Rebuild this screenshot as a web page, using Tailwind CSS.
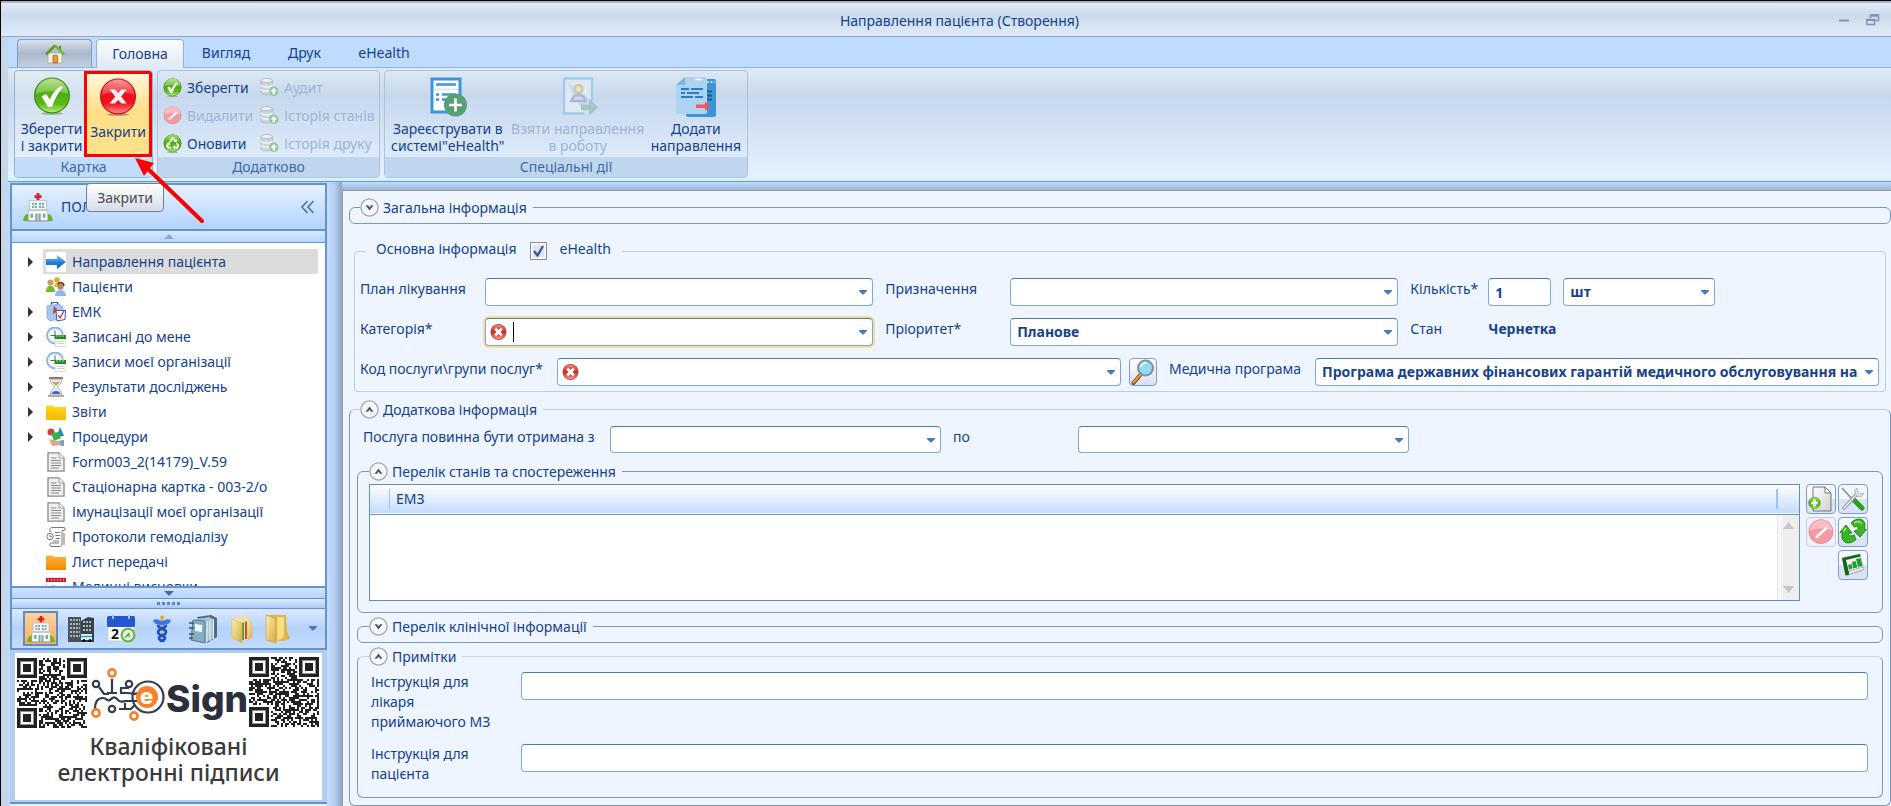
<!DOCTYPE html>
<html lang="uk">
<head>
<meta charset="utf-8">
<title>Направлення пацієнта (Створення)</title>
<script src="https://cdn.jsdelivr.net/npm/@tailwindcss/browser@4"></script>
</head>
<body class="h-screen overflow-hidden font-['Noto_Sans','Open_Sans',sans-serif] text-sm text-[#15428b] bg-[#bfdbff]">

<!-- Shared gradients and icon symbols -->
<svg width="0" height="0" class="absolute" aria-hidden="true">
  <defs>
    <linearGradient id="gGreen" x1="0" y1="0" x2="0" y2="1"><stop offset="0" stop-color="#a6dc6a"/><stop offset=".45" stop-color="#4fae14"/><stop offset=".75" stop-color="#5cb81c"/><stop offset="1" stop-color="#b4ee70"/></linearGradient>
    <linearGradient id="gRed" x1="0" y1="0" x2="0" y2="1"><stop offset="0" stop-color="#ff7a80"/><stop offset=".4" stop-color="#f0101c"/><stop offset=".7" stop-color="#ee1320"/><stop offset="1" stop-color="#ff8a8a"/></linearGradient>
    <linearGradient id="gErr" x1="0" y1="0" x2="0" y2="1"><stop offset="0" stop-color="#f08a80"/><stop offset=".5" stop-color="#c92a20"/><stop offset="1" stop-color="#ef9a84"/></linearGradient>
    <linearGradient id="gArrow" x1="0" y1="0" x2="0" y2="1"><stop offset="0" stop-color="#7cc8f4"/><stop offset=".5" stop-color="#2386d8"/><stop offset="1" stop-color="#0c5cb0"/></linearGradient>
    <linearGradient id="gYel" x1="0" y1="0" x2="0" y2="1"><stop offset="0" stop-color="#ffd91a"/><stop offset="1" stop-color="#f3b800"/></linearGradient>
    <linearGradient id="gOra" x1="0" y1="0" x2="0" y2="1"><stop offset="0" stop-color="#ffb33c"/><stop offset="1" stop-color="#f08a00"/></linearGradient>
    <linearGradient id="gFold" x1="0" y1="0" x2="1" y2="1"><stop offset="0" stop-color="#fbf0b4"/><stop offset="1" stop-color="#d8a93a"/></linearGradient>
    <linearGradient id="gDoc" x1="0" y1="0" x2="1" y2="1"><stop offset="0" stop-color="#fff"/><stop offset="1" stop-color="#cfcfcf"/></linearGradient>
  </defs>
  <symbol id="ok" viewBox="0 0 38 38"><ellipse cx="19" cy="36.500" rx="11" ry="1.300" fill="#6d8b5c" opacity=".6"/><circle cx="19" cy="18.500" r="18" fill="#3b8f17"/><circle cx="19" cy="18.500" r="16.800" fill="url(#gGreen)"/><path d="M3 17a16 16 0 0 1 32 0c-9-4-22-4-32 0z" fill="#fff" opacity=".22"/><path d="M8.500 19.500l4.500-2.500 4 5.500c2-6 6-10.500 11-13.500l2 1.500c-5 5-8.500 11.500-11 19.500h-4z" fill="#fff"/></symbol>
  <symbol id="close" viewBox="0 0 38 38"><ellipse cx="19" cy="36.500" rx="11" ry="1.300" fill="#8b5c5c" opacity=".6"/><circle cx="19" cy="18.500" r="18" fill="#c4121c"/><circle cx="19" cy="18.500" r="16.800" fill="url(#gRed)"/><path d="M3 17a16 16 0 0 1 32 0c-9-4-22-4-32 0z" fill="#fff" opacity=".2"/><path d="M10.500 11.500h5.500l3.200 3.600 3.200-3.600h5.400l-5.600 7 5.600 7h-5.400l-3.200-3.600-3.200 3.600h-5.500l5.800-7z" fill="#f1f1f1"/></symbol>
  <symbol id="del" viewBox="0 0 38 38"><circle cx="19" cy="18.500" r="18" fill="#e98b95"/><circle cx="19" cy="18.500" r="16.500" fill="#f49aa2"/><path d="M3 17a16 16 0 0 1 32 0c-9-4-22-4-32 0z" fill="#fff" opacity=".35"/><path d="M10.500 25.500l16-14.500 2.500 3-16 14.500z" fill="#fff"/></symbol>
  <symbol id="recycle" viewBox="0 0 38 38"><ellipse cx="19" cy="36.500" rx="11" ry="1.300" fill="#6d8b5c" opacity=".6"/><circle cx="19" cy="18.500" r="18" fill="#3b8f17"/><circle cx="19" cy="18.500" r="16.800" fill="url(#gGreen)"/><g fill="none" stroke="#fff" stroke-width="3.600"><path d="M14 16l4-7h3l4 6M27.500 18l3 5-2 4h-6M16 27h-6l-2-3 3-6"/></g><path d="M21 16h7v-6zM24 22v9l-5-4.500zM7 19l6-3 2 7z" fill="#fff"/></symbol>
  <symbol id="db" viewBox="0 0 20 20"><g stroke="#aab5c0" stroke-width=".8"><path d="M1 3v13c0 3 12 3 12 0V3z" fill="#ccd5dd"/><ellipse cx="7" cy="3.200" rx="6" ry="2.200" fill="#e9eef2"/><path d="M1 7.500c0 3 12 3 12 0M1 12c0 3 12 3 12 0" fill="none" stroke="#f1f4f7" stroke-width="1.400"/></g><circle cx="14.500" cy="14.500" r="5" fill="#8fc9a0"/><path d="M14.500 11l3.500 3.700h-2.300V18h-2.400v-3.300H11z" fill="#fff"/></symbol>
  <symbol id="err" viewBox="0 0 18 18"><circle cx="9" cy="9" r="8.500" fill="#b9473d"/><circle cx="9" cy="9" r="7.700" fill="url(#gErr)"/><path d="M5.500 5.500l7 7M12.500 5.500l-7 7" stroke="#fff" stroke-width="2.800"/></symbol>
  <symbol id="tri" viewBox="0 0 8 5"><path d="M0 0h8v1L4.500 4.500h-1L0 1z" fill="#4a7ab8"/></symbol>
  <symbol id="hosp" viewBox="0 0 28 28"><path d="M12.700 1h2.600v2h2v2.600h-2v2h-2.600v-2h-2V3h2z" fill="#d81e2c"/><path d="M0 27c1-6 4-8 7-5v5zM28 27c-1-6-4-8-7-5v5z" fill="#62b52c"/><path d="M6 8h16v9H6z" fill="#f4f6f7" stroke="#b3b9bd" stroke-width=".7"/><path d="M5 17h18v10H5z" fill="#fff" stroke="#b3b9bd" stroke-width=".7"/><path d="M4 16h20v2H4z" fill="#c9c9c3"/><path d="M8.500 10h4.500v5H8.500zM15 10h4.500v5H15zM11.500 20h5v7h-5zM7 20h2.500v4H7zM18.500 20H21v4h-2.500z" fill="#7ba8ad"/><path d="M10.700 10v5M17.200 10v5M14 20v7M8.500 12.500h11" stroke="#fff" stroke-width=".8"/><path d="M3 27h22" stroke="#999" /></symbol>
  <symbol id="page" viewBox="0 0 20 20"><path d="M2 .8h11l5 5.200v13.200H2z" fill="#efefef" stroke="#8d8d8d" stroke-width="1.300"/><path d="M13 1v5h5" fill="#fff" stroke="#999"/><path d="M5 6h5.500M5 8.500h10M5 11h10M5 13.500h10M5 16h8" stroke="#8b8b8b" stroke-width="1.100"/></symbol>
  <symbol id="clock" viewBox="0 0 20 20"><circle cx="9" cy="8.500" r="8" fill="#eaf4fb" stroke="#8db6d6" stroke-width="1.800"/><circle cx="9" cy="8.500" r="5.800" fill="#fff" stroke="#cddfeb" stroke-width=".6"/><path d="M9 3.500v5H4.500M9 8.500l3.500 2" stroke="#55606c" fill="none"/><path d="M9 9h11v10.500H9z" fill="#fdfdf6" stroke="#c8c8b8" stroke-width=".6"/><path d="M8.500 8h11.500v4H8.500z" fill="#1e8f22"/><path d="M11 7v3M14 7v3M17 7v3" stroke="#bfe6b8" stroke-width=".9"/><path d="M11 14.500h7M11 16.500h7" stroke="#c7cfc2" stroke-width=".9"/></symbol>
  <symbol id="folder" viewBox="0 0 20 16"><path d="M0 1.500h7l1.500 1.500H20V16H0z"/></symbol>
  <symbol id="down" viewBox="0 0 19 19"><circle cx="9.500" cy="9.500" r="8.600" fill="#f5f8fc" stroke="#a5a5a5" stroke-width="1.300"/><path d="M5.500 7.200h2.500l1.500 2 1.500-2h2.500l-4 5.300z" fill="#555"/></symbol>
  <symbol id="up" viewBox="0 0 19 19"><circle cx="9.500" cy="9.500" r="8.600" fill="#f5f8fc" stroke="#a5a5a5" stroke-width="1.300"/><path d="M5.500 11.800h2.500l1.500-2 1.500 2h2.500l-4-5.300z" fill="#555"/></symbol>
</svg>

<div class="relative flex h-full flex-col border-t border-l border-black">
  <!-- Title bar -->
  <header class="flex h-9 shrink-0 items-center border-t-2 border-b border-t-[#a9b4c6] border-b-[#98a6b9] bg-linear-to-b from-[#e3ecf7] from-0% via-[#cbdaec] via-35% to-[#dfebf9] to-100% pr-[11px]">
    <h1 class="flex-1 pt-0.5 pl-20 text-center">Направлення пацієнта (Створення)</h1>
    <div class="flex items-center gap-4">
      <button aria-label="Згорнути"><svg width="12" height="14"><path d="M1 7.500h10" stroke="#8295b5" stroke-width="2"/></svg></button>
      <button aria-label="Відновити"><svg width="14" height="14" fill="none" stroke="#8295b5" stroke-width="1.500"><path d="M4.500 5V2h8v5.500H9.500"/><path d="M4 2.500h9" stroke-width="2.500"/><path d="M1 6.500h7.500v5H1z"/><path d="M1 7h8" stroke-width="2"/></svg></button>
    </div>
  </header>

  <div class="flex min-h-0 flex-1 flex-col border-l-7 border-[#c6d6ea]">
    <!-- Ribbon tabs -->
    <nav class="flex h-[31px] shrink-0 items-end border-b border-[#8db2e3] pl-[9px]">
      <button aria-label="Початок" class="mr-1 grid h-7 w-[75px] place-items-center rounded-t border border-b-0 border-[#8b9cb6] bg-linear-to-b from-[#dbe2ec] via-[#a9b8ce] via-50% to-[#c5d0e0]">
        <svg width="20" height="20"><path d="M3 9h14v10H3z" fill="#f2efdf" stroke="#b0aa90" stroke-width=".7"/><path d="M14 2h2v4h-2z" fill="#9a6a3a"/><path d="M10 1.500L1 10.500" stroke="#5e9a28" stroke-width="2.600"/><path d="M10 1.500l9 9" stroke="#76b836" stroke-width="2.600"/><path d="M8 11.500h4.500V19H8z" fill="#e8973a" stroke="#a8601a" stroke-width=".7"/></svg>
      </button>
      <button class="-mb-px h-[29px] w-[88px] rounded-t border border-b-0 border-[#8db2e3] bg-linear-to-b from-[#fbfdff] to-[#dfeaf6]">Головна</button>
      <button class="h-7 w-[84px]">Вигляд</button>
      <button class="h-7 w-[73px]">Друк</button>
      <button class="h-7 w-[86px]">eHealth</button>
    </nav>

    <!-- Ribbon -->
    <section class="flex h-[114px] shrink-0 gap-1 border-b border-[#7a9bb8] bg-linear-to-b from-[#dfeaf4] from-0% via-[#c7d8ed] via-25% to-[#e6f2ff] to-100% px-1.5 pt-0.5 pb-[3px] leading-[17px] shadow-[inset_0_-2px_0_#c3f3fb]">
      <div class="flex w-[139px] flex-col overflow-hidden rounded border border-[#8fb4de] bg-white/20">
        <div class="flex min-h-0 flex-1">
          <button class="flex flex-1 flex-col items-center gap-[5px] pt-1.5 pl-1"><svg width="38" height="38"><use href="#ok"/></svg><span class="whitespace-nowrap">Зберегти<br>і закрити</span></button>
          <button class="flex w-[68px] flex-col items-center gap-[7px] border-3 border-[#ff0000] bg-linear-to-b from-[#fff6d8] via-[#ffe08a] via-45% to-[#ffe18c] pt-1"><svg width="38" height="38"><use href="#close"/></svg><span>Закрити</span></button>
        </div>
        <div class="h-5 bg-[#c3dcfb] text-center leading-5 text-[#3e6aaa]">Картка</div>
      </div>

      <div class="flex w-[223px] flex-col overflow-hidden rounded border border-[#aac4dc]">
        <div class="grid min-h-0 flex-1 grid-cols-[97px_1fr] content-evenly pt-0.5 pl-[5px]">
          <button class="flex h-7 items-center gap-[5px]"><svg width="19" height="19"><use href="#ok"/></svg>Зберегти</button>
          <button disabled class="flex h-7 items-center gap-[5px] text-[#9fb5d5]"><svg width="19" height="20"><use href="#db"/></svg>Аудит</button>
          <button disabled class="flex h-7 items-center gap-[5px] text-[#9fb5d5]"><svg width="19" height="19"><use href="#del"/></svg>Видалити</button>
          <button disabled class="flex h-7 items-center gap-[5px] whitespace-nowrap text-[#9fb5d5]"><svg width="19" height="20"><use href="#db"/></svg>Історія станів</button>
          <button class="flex h-7 items-center gap-[5px]"><svg width="19" height="19"><use href="#recycle"/></svg>Оновити</button>
          <button disabled class="flex h-7 items-center gap-[5px] whitespace-nowrap text-[#9fb5d5]"><svg width="19" height="20"><use href="#db"/></svg>Історія друку</button>
        </div>
        <div class="h-5 bg-[#c0d6ee] text-center leading-5 text-[#3e6aaa]">Додатково</div>
      </div>

      <div class="flex w-[364px] flex-col overflow-hidden rounded border border-[#aac4dc]">
        <div class="flex min-h-0 flex-1 justify-between px-1.5 whitespace-nowrap">
          <button class="flex flex-col items-center gap-[3px] pt-1.5">
            <svg width="40" height="40"><path d="M4 2h28v33H4z" fill="#fff" stroke="#3a96d8" stroke-width="3"/><path d="M8 7.500h20M14 17.500h14M14 22.500h8" stroke="#3a96d8" stroke-width="2.400"/><path d="M8 17.500h3M8 22.500h3" stroke="#3a96d8" stroke-width="2.400"/><path d="M6 12.500h24" stroke="#e3e8ec" stroke-width="2"/><circle cx="27.500" cy="28" r="11.500" fill="#5a9e75"/><path d="M21 28h13M27.500 21.500v13" stroke="#fff" stroke-width="2.600"/></svg>
            <span>Зареєструвати в<br>системі"eHealth"</span></button>
          <button disabled class="flex flex-col items-center gap-[3px] pt-1.5 text-[#9fb5d5]">
            <svg width="40" height="40"><path d="M6 1.500h28V24M26 36.500H6v-35" fill="#dfe9f4" stroke="#9fcbea" stroke-width="2.400"/><circle cx="20.500" cy="12" r="4" fill="#e3e0d0" stroke="#cfc8a0" stroke-width="2.400"/><path d="M13.500 24c1-8 13-8 14 0z" fill="#cdd8ea" stroke="#a7b8dc" stroke-width="2.400"/><path d="M23 27.500h8v-5.500l9.500 8.500-9.500 8V33h-8z" fill="#a5c6c0"/></svg>
            <span>Взяти направлення<br>в роботу</span></button>
          <button class="flex flex-col items-center gap-[3px] pt-1.5">
            <svg width="42" height="40"><rect x="11" y="2" width="30" height="38" rx="2" fill="#3a96d6"/><path d="M32 5h2M35.500 5h2M39 5h1" stroke="#b7dbf3" stroke-width="2"/><path d="M30 14.500h7M30 18.500h7M30 22.500h7" stroke="#1f5a8a" stroke-width="1.800"/><path d="M10 0h20a2 2 0 0 1 2 2v33a2 2 0 0 1-2 2H3a2 2 0 0 1-2-2V9z" fill="#aed3f0"/><path d="M10 0v8H1z" fill="#7fb4e4"/><path d="M20 2.500h7" stroke="#fff" stroke-width="1.500"/><path d="M6 12h8M16 12h12M6 16h4M12 16h12M6 20h12M20 20h8" stroke="#2f7dba" stroke-width="1.800"/><path d="M21 27.500h9v-3l5 4.800-5 4.700v-3h-9z" fill="#f7525e"/></svg>
            <span>Додати<br>направлення</span></button>
        </div>
        <div class="h-5 bg-[#c0d6ee] text-center leading-5 text-[#3e6aaa]">Спеціальні дії</div>
      </div>
    </section>

    <!-- Work area -->
    <div class="flex min-h-0 flex-1 pl-0.5">
      <!-- Navigation panel -->
      <aside class="flex w-[317px] shrink-0 flex-col bg-[#b3cdef] pt-px">
        <div class="flex h-12 shrink-0 items-center border-2 border-[#6593cf] bg-linear-to-b from-[#e6f1ff] to-[#b3d3ff] pr-[11px] pl-[11px]">
          <svg width="30" height="30"><use href="#hosp"/></svg>
          <h2 class="flex-1 pl-2">ПОЛІКЛІНІКА</h2>
          <button aria-label="Згорнути панель"><svg width="13" height="14" fill="none" stroke="#4f7ab8" stroke-width="1.800"><path d="M6.500 1L1 7l5.500 6M12.500 1L7 7l5.500 6"/></svg></button>
        </div>
        <button aria-label="Прокрутити вгору" class="grid h-3 shrink-0 place-items-center border-x-2 border-b border-[#6593cf] bg-linear-to-b from-[#d9e9ff] to-[#b7d5fc]"><svg width="10" height="5"><path d="M5 0l5 5H0z" fill="#8caad2"/></svg></button>
        <ul class="min-h-0 flex-1 overflow-hidden border-x-2 border-[#6593cf] bg-white pt-1.5 pr-[7px] pl-[15px] leading-[25px] whitespace-nowrap">
          <li class="flex items-center"><svg width="6" height="10"><path d="M1 0l5 5-5 5z" fill="#333"/></svg><a href="#" class="ml-[10px] flex flex-1 items-center gap-1.5 bg-[#dcdcdc] pl-[3px]"><svg width="20" height="20" class="bg-white"><path d="M0 7h11V3l9 7-9 7v-4H0z" fill="url(#gArrow)"/></svg>Направлення пацієнта</a></li>
          <li><a href="#" class="ml-4 flex items-center gap-1.5 pl-[3px]"><svg width="20" height="20"><circle cx="4.500" cy="5.500" r="3" fill="#c99a6e"/><path d="M0 15c0-9 9-8 9 0z" fill="#7db52a"/><circle cx="11" cy="3" r="2.800" fill="#d8b02e"/><path d="M8 10c0-6 7-6 8 0z" fill="#e0b83a"/><circle cx="14.500" cy="9.500" r="3.200" fill="#b98a62"/><path d="M12 7c2-3 6-1 6 2" stroke="#5a3a20" fill="none" stroke-width="1.500"/><path d="M9 19c0-8 11-8 11 0z" fill="#8cbcea"/></svg>Пацієнти</a></li>
          <li class="flex items-center"><svg width="6" height="10"><path d="M1 0l5 5-5 5z" fill="#333"/></svg><a href="#" class="ml-[10px] flex items-center gap-1.5 pl-[3px]"><svg width="20" height="20"><path d="M1 4l12-2 4 3v11L4 19 1 16z" fill="#a8c6ec" stroke="#7c9ccc" stroke-width=".7"/><path d="M5 2.500l1-2 5-.5 1 2" fill="none" stroke="#2c62b8" stroke-width="1.600"/><path d="M8 4l3 3-1 3-3 2z" fill="#d43a3a"/><path d="M10 8.500h9.500l-.5 9-8 1.500z" fill="#fff" stroke="#3a5a98"/><path d="M12 13l2 3 4-7" fill="none" stroke="#d23030" stroke-width="1.300"/></svg>ЕМК</a></li>
          <li class="flex items-center"><svg width="6" height="10"><path d="M1 0l5 5-5 5z" fill="#333"/></svg><a href="#" class="ml-[10px] flex items-center gap-1.5 pl-[3px]"><svg width="20" height="20"><use href="#clock"/></svg>Записані до мене</a></li>
          <li class="flex items-center"><svg width="6" height="10"><path d="M1 0l5 5-5 5z" fill="#333"/></svg><a href="#" class="ml-[10px] flex items-center gap-1.5 pl-[3px]"><svg width="20" height="20"><use href="#clock"/></svg>Записи моєї організації</a></li>
          <li class="flex items-center"><svg width="6" height="10"><path d="M1 0l5 5-5 5z" fill="#333"/></svg><a href="#" class="ml-[10px] flex items-center gap-1.5 pl-[3px]"><svg width="20" height="20"><path d="M4 2c0 5 4 6 4 8s-4 3-4 8h12c0-5-4-6-4-8s4-3 4-8z" fill="#dfe9f5" stroke="#8fa6c2" stroke-width=".8"/><path d="M6 5h8l-4 4z" fill="#d9a441"/><path d="M5.500 17c1-4 8-4 9 0z" fill="#3f62c4"/><path d="M3 0h14v2H3z" fill="#9a7a5a"/><path d="M2 18h16v2H2z" fill="#b9a99a"/></svg>Результати досліджень</a></li>
          <li class="flex items-center"><svg width="6" height="10"><path d="M1 0l5 5-5 5z" fill="#333"/></svg><a href="#" class="ml-[10px] flex items-center gap-1.5 pl-[3px]"><svg width="20" height="16" fill="url(#gYel)"><use href="#folder"/></svg>Звіти</a></li>
          <li class="flex items-center"><svg width="6" height="10"><path d="M1 0l5 5-5 5z" fill="#333"/></svg><a href="#" class="ml-[10px] flex items-center gap-1.5 pl-[3px]"><svg width="20" height="20"><circle cx="5" cy="5" r="3.500" fill="#d93a3a"/><path d="M14 0l4 9h-7z" fill="#2a7fd0"/><path d="M5 6l8-1 2 6-7 3z" fill="#2db54a"/><path d="M3 12l8 2 6-1-1 5-10 1z" fill="#d8a98a"/><path d="M14 14l4-1v6h-3z" fill="#7a9ad4"/></svg>Процедури</a></li>
          <li><a href="#" class="ml-4 flex items-center gap-1.5 pl-[3px]"><svg width="20" height="20"><use href="#page"/></svg>Form003_2(14179)_V.59</a></li>
          <li><a href="#" class="ml-4 flex items-center gap-1.5 pl-[3px]"><svg width="20" height="20"><use href="#page"/></svg>Стаціонарна картка - 003-2/о</a></li>
          <li><a href="#" class="ml-4 flex items-center gap-1.5 pl-[3px]"><svg width="20" height="20"><use href="#page"/></svg>Імунацізації моєї організації</a></li>
          <li><a href="#" class="ml-4 flex items-center gap-1.5 pl-[3px]"><svg width="20" height="20" fill="none" stroke="#777"><path d="M4 5V2.500C4 1 5 .5 6 .5h12c1.500 0 1.500 3 0 3h-2v13c0 2-1 3-2.500 3H5c-1.500 0-1.500-3.500 0-3.500h8"/><circle cx="4" cy="9.500" r="3.200"/><path d="M4 7.500v2h1.800M9 5.500h5M9.500 8.500H14M9.500 11.500H14M7 14h6M18 6v12" /></svg>Протоколи гемодіалізу</a></li>
          <li><a href="#" class="ml-4 flex items-center gap-1.5 pl-[3px]"><svg width="20" height="16" fill="url(#gOra)"><use href="#folder"/></svg>Лист передачі</a></li>
          <li><a href="#" class="ml-4 flex items-center gap-1.5 pl-[3px]"><svg width="20" height="20"><path d="M0 1h20v18H0z" fill="#fff" stroke="#b9b9b9"/><path d="M0 1h20v4H0z" fill="#cf1f2a"/><path d="M2 3h16" stroke="#fff" stroke-dasharray="1 2"/><path d="M4 12l3-3 3 3M12 10h4" stroke="#58a83a" fill="none" stroke-width="1.500"/></svg>Медичні висновки</a></li>
        </ul>
        <button aria-label="Прокрутити вниз" class="grid h-3 shrink-0 place-items-center border-2 border-b-0 border-[#6593cf] bg-linear-to-b from-[#cfe3ff] to-[#b7d5fc]"><svg width="10" height="5"><path d="M0 0h10L5 5z" fill="#3f6ab0"/></svg></button>
        <div class="grid h-[11px] shrink-0 place-items-center border-x-2 border-t border-b border-[#6593cf] bg-linear-to-b from-[#dcebff] to-[#a9cbf9]"><svg width="24" height="3"><path d="M0 1.500h24" stroke="#5f86c2" stroke-width="3" stroke-dasharray="3 2"/></svg></div>
        <div class="flex h-[41px] shrink-0 items-center border-2 border-t-0 border-[#6593cf] bg-linear-to-b from-[#dbeaff] via-[#b5d2fb] via-50% to-[#c3dcff] pl-[11px]">
          <button aria-label="Поліклініка" class="grid h-[35px] w-[35px] place-items-center border-2 border-[#5f8ac4] bg-linear-to-b from-[#fdd0a0] to-[#ffb04a]"><svg width="28" height="28"><use href="#hosp"/></svg></button>
          <div class="flex flex-1 items-center justify-between pr-2 pl-[9px]">
            <button aria-label="Стаціонар"><svg width="28" height="28"><path d="M1 2h13v25H1z" fill="#4b5359"/><path d="M14 6l7-4 6 1v24H14z" fill="#39424a"/><path d="M3 5h10M3 9h10M3 13h10M3 17h10M3 21h10M16 7h9M16 11h9M16 15h9" stroke="#a7b4ba" stroke-width="2" stroke-dasharray="2 1"/><path d="M14 19h11v6H14z" fill="#e6f3f8"/><path d="M14 21.500h11" stroke="#2c9cc4" stroke-width="1.500"/><circle cx="17" cy="25.500" r="1.500"/><circle cx="23" cy="25.500" r="1.500"/></svg></button>
            <button aria-label="Календар"><svg width="30" height="28"><path d="M1 10h26v16H1z" fill="#fcfcfc" stroke="#cfcfcf"/><rect x="0" y="1" width="28" height="11" rx="1.500" fill="#2457d0"/><path d="M6 0v4M22 0v4" stroke="#a8c0f0" stroke-width="2"/><text x="4" y="24" font-family="Noto Sans" font-weight="700" font-size="14" fill="#111">2</text><circle cx="21" cy="20" r="7.500" fill="#6db54a"/><circle cx="21" cy="20" r="5.300" fill="#e3f3d9"/><path d="M18.500 22.500l4-4.500M21 20l2 1.500" stroke="#5a9c3c" stroke-width="1.500"/></svg></button>
            <button aria-label="Лікарі"><svg width="28" height="28"><path d="M14 2v25" stroke="#ddaa38" stroke-width="1.500"/><circle cx="14" cy="2.500" r="2" fill="#e9a52c"/><path d="M5 5c4-2 6 0 9 1 3-1 5-3 9-1-1 4-4 5-9 5S6 9 5 5z" fill="#3a78e4"/><path d="M10 10c0 4 8 3 8 7s-7 3-7 6 5 2 4 4M18 10c0 4-8 3-8 7s7 3 7 6-5 2-4 4" fill="none" stroke="#1c4fc8" stroke-width="2.600"/></svg></button>
            <button aria-label="Журнали"><svg width="30" height="30"><path d="M9 3l14-2 6 3v19l-10 6z" fill="#4d6b7d"/><path d="M8 5l13-2 4 2v20l-8 3z" fill="#a7c4d6"/><path d="M5 6l12 1v22L3 26z" fill="#86adc6" stroke="#54788e"/><path d="M7 10l7 1v7l-7-1z" fill="#f1f6f9"/><path d="M19 7v21M22 6v21M25.500 5v20" stroke="#eef4f7"/><path d="M1 9h5M1 14h5M1 20h5M1 24h4" stroke="#44535c" stroke-width="1.300"/></svg></button>
            <button aria-label="Документи"><svg width="24" height="28"><path d="M3 3l11-2 4 2v20H3z" fill="#efe4a6"/><path d="M12 8l2-1v18h-2z" fill="#4a9e3c"/><path d="M15 7l2-1v18h-2z" fill="#d14a2c"/><path d="M17 8l5-3v17l-5 5z" fill="url(#gFold)"/><path d="M2 4l10 4v20L2 23z" fill="url(#gFold)" stroke="#dfb64e" stroke-width=".6"/></svg></button>
            <button aria-label="Папки"><svg width="26" height="30"><path d="M1 1h20l1 16 3 8-6 2H2z" fill="#e0b54a"/><path d="M12 3h7v20l-7 4z" fill="#f6dd86"/><path d="M1 1l10 4v24L1 26z" fill="url(#gFold)" stroke="#caa03a" stroke-width=".6"/></svg></button>
            <button aria-label="Більше" class="pl-1.5"><svg width="8" height="5"><use href="#tri"/></svg></button>
          </div>
        </div>
        <a href="#" class="mx-[5px] mt-[3px] flex h-[147px] shrink-0 flex-col bg-white font-medium text-[#3a3a3c]">
          <svg viewBox="0 0 307 80" class="h-20 w-full">
            <g id="qrA" transform="translate(2 5)" fill="#222"></g>
            <g id="qrB" transform="translate(234 4)" fill="#222"></g>
            <g fill="none" stroke="#343b4a" stroke-width="2.200">
              <circle cx="81" cy="31" r="3.200"/><circle cx="114" cy="31" r="3.200"/><circle cx="97" cy="56" r="3.200"/>
              <path d="M84 34l5 7h5M97 26v14M92 40h10M114 35h-8v5h7c4 0 6 2 10 0M80 56c0-7 3-11 8-11 4 0 4 4 7 2 3-3 5-4 8 0 2 3 5 1 8 1h12M104 56h6v-6M111 56h5l4-4"/>
              <circle cx="133" cy="44" r="15.500"/>
            </g>
            <g fill="none" stroke="#f5822b" stroke-width="2.600"><circle cx="97" cy="20" r="3.600"/><circle cx="81" cy="60" r="3.600"/><circle cx="119" cy="63" r="3.600"/></g>
            <circle cx="132" cy="44" r="11" fill="#f5822b"/>
            <text x="125" y="51" font-family="Inter" font-weight="800" font-size="22" fill="#fff">e</text>
            <text x="151" y="59" font-family="Inter" font-weight="800" font-size="37" fill="#2b303c">Sign</text>
          </svg>
          <span class="text-center text-[23px] leading-[26px]">Кваліфіковані<br>електронні підписи</span>
        </a>
        <div class="mt-[2px] h-1 shrink-0 border-t-2 border-[#6593cf] bg-[#e6f1ff]"></div>
      </aside>

      <div class="w-[15px] shrink-0 bg-linear-to-r from-[#c3dcff] via-[#b4cdf0] to-[#8ea6c8]"></div>

      <!-- Form -->
      <div class="flex min-w-0 flex-1 flex-col">
        <div class="h-2 shrink-0 bg-linear-to-b from-[#c3dcff] to-[#9db5d6]"></div>
        <main class="min-h-0 flex-1 overflow-hidden border-t border-l border-[#9a9a9f] bg-[#eef5ff] pt-[7px] pl-1.5">
          <fieldset class="min-w-0 rounded-md border border-[#7a98bd] pb-1.5 pl-1">
            <legend class="ml-1.5 flex h-[19px] items-center gap-1 pr-1.5 leading-[19px]"><button aria-label="Розгорнути"><svg width="19" height="19"><use href="#down"/></svg></button>Загальна інформація</legend>
          </fieldset>

          <fieldset class="mt-[18px] mr-[5px] ml-[5px] min-w-0 rounded border border-[#bccfdc] pt-[17px] pr-1.5 pb-[5px] pl-[5px]">
            <legend class="ml-1.5 flex h-[19px] items-start gap-[13px] pr-[11px] pl-[10px] leading-[13px]"><span>Основна інформація</span>
              <input id="eh" type="checkbox" checked class="peer sr-only"><label for="eh" aria-label="eHealth" class="grid h-[18px] w-[17px] place-items-center border border-[#8e8f8f] bg-[#dfe3ee] shadow-[inset_0_0_0_2px_#f4f4f4]"><svg width="11" height="12"><path d="M1 6l3.500 4.500L10 1" fill="none" stroke="#3b5597" stroke-width="2.300"/></svg></label>
              <label for="eh">eHealth</label></legend>
            <div class="grid grid-cols-[113px_389fr_113px_389fr_66px_227px_152fr] gap-x-3 gap-y-3 leading-[22px] whitespace-nowrap">
              <label for="plan">План лікування</label>
              <div class="relative h-7"><select id="plan" class="h-7 w-full appearance-none rounded-sm border border-[#7fa6dd] border-t-[#4a78b5] bg-white px-1.5 font-bold"><option></option></select><svg width="8" height="5" class="pointer-events-none absolute top-3 right-1.5"><use href="#tri"/></svg></div>
              <label for="appt">Призначення</label>
              <div class="relative h-7"><select id="appt" class="h-7 w-full appearance-none rounded-sm border border-[#7fa6dd] border-t-[#4a78b5] bg-white px-1.5 font-bold"><option></option></select><svg width="8" height="5" class="pointer-events-none absolute top-3 right-1.5"><use href="#tri"/></svg></div>
              <label for="qty">Кількість*</label>
              <div class="flex gap-3"><input id="qty" value="1" class="h-7 w-[63px] rounded-sm border border-[#7fa6dd] border-t-[#4a78b5] bg-white px-1.5 font-bold">
                <div class="relative h-7 flex-1"><select aria-label="Одиниця" class="h-7 w-full appearance-none rounded-sm border border-[#7fa6dd] border-t-[#4a78b5] bg-white px-1.5 font-bold"><option>шт</option></select><svg width="8" height="5" class="pointer-events-none absolute top-3 right-1.5"><use href="#tri"/></svg></div></div>
              <span></span>

              <label for="cat">Категорія*</label>
              <div class="relative h-7"><select id="cat" class="h-7 w-full appearance-none rounded-sm border border-[#7fa6dd] border-t-[#4a78b5] bg-white px-1.5 font-bold shadow-[0_0_0_2px_#f6dd9a]"><option></option></select><svg width="17" height="18" class="pointer-events-none absolute top-[5px] left-[5px]"><use href="#err"/></svg><i class="pointer-events-none absolute top-1 left-7 h-5 w-px bg-black"></i><svg width="8" height="5" class="pointer-events-none absolute top-3 right-1.5"><use href="#tri"/></svg></div>
              <label for="prio">Пріоритет*</label>
              <div class="relative h-7"><select id="prio" class="h-7 w-full appearance-none rounded-sm border border-[#7fa6dd] border-t-[#4a78b5] bg-white px-1.5 font-bold"><option>Планове</option></select><svg width="8" height="5" class="pointer-events-none absolute top-3 right-1.5"><use href="#tri"/></svg></div>
              <span>Стан</span><b class="font-bold">Чернетка</b><span></span>
            </div>
            <div class="mt-3 flex leading-[22px] whitespace-nowrap">
              <label for="code" class="w-[197px] shrink-0">Код послуги\групи послуг*</label>
              <div class="relative h-7 flex-1"><select id="code" class="h-7 w-full appearance-none rounded-sm border border-[#7fa6dd] border-t-[#4a78b5] bg-white px-1.5 font-bold"><option></option></select><svg width="17" height="18" class="pointer-events-none absolute top-[5px] left-[5px]"><use href="#err"/></svg><svg width="8" height="5" class="pointer-events-none absolute top-3 right-1.5"><use href="#tri"/></svg></div>
              <button aria-label="Пошук" class="ml-2 grid h-7 w-7 shrink-0 place-items-center rounded-sm border border-[#7f9dc6] bg-linear-to-b from-white to-[#d5e1f3]"><svg width="24" height="26"><path d="M2.500 24L10 15" stroke="#7a4a1c" stroke-width="4" stroke-linecap="round"/><path d="M2.500 23.500L9.500 15.500" stroke="#e39a44" stroke-width="2" stroke-linecap="round"/><circle cx="14.500" cy="9" r="7.500" fill="#8fdcf4" stroke="#8a9299" stroke-width="2"/><path d="M9.500 8a5 5 0 0 1 6-4" stroke="#e6fbff" stroke-width="2" fill="none"/></svg></button>
              <label for="prog" class="ml-3 w-[146px] shrink-0">Медична програма</label>
              <div class="relative h-7 min-w-0 flex-1"><select id="prog" class="h-7 w-full appearance-none overflow-hidden rounded-sm border border-[#7fa6dd] border-t-[#4a78b5] bg-white pr-5 pl-1.5 font-bold"><option>Програма державних фінансових гарантій медичного обслуговування населення</option></select><svg width="8" height="5" class="pointer-events-none absolute top-3 right-1.5"><use href="#tri"/></svg></div>
            </div>
          </fieldset>

          <fieldset class="mt-2 min-w-0 rounded-md border border-[#7a98bd] border-t-[#bccfe2] pt-[7px] pr-[7px] pb-[7px] pl-[7px]">
            <legend class="ml-[3px] flex h-[19px] items-center gap-1 pr-1.5 leading-[19px]"><button aria-label="Згорнути"><svg width="19" height="19"><use href="#up"/></svg></button>Додаткова інформація</legend>
            <div class="flex pl-1.5 leading-[22px] whitespace-nowrap">
              <label for="from" class="w-[247px]">Послуга повинна бути отримана з</label>
              <div class="relative h-[27px] w-[331px]"><select id="from" class="h-[27px] w-full appearance-none rounded-sm border border-[#7fa6dd] border-t-[#4a78b5] bg-white"><option></option></select><svg width="8" height="5" class="pointer-events-none absolute top-3 right-1.5"><use href="#tri"/></svg></div>
              <label for="to" class="ml-3 w-[125px]">по</label>
              <div class="relative h-[27px] w-[331px]"><select id="to" class="h-[27px] w-full appearance-none rounded-sm border border-[#7fa6dd] border-t-[#4a78b5] bg-white"><option></option></select><svg width="8" height="5" class="pointer-events-none absolute top-3 right-1.5"><use href="#tri"/></svg></div>
            </div>

            <fieldset class="mt-[9px] min-w-0 rounded-md border border-[#7a98bd] pt-[3px] pr-[14px] pb-[11px] pl-[11px]">
              <legend class="flex h-[19px] items-center gap-1 pr-1.5 leading-[19px]"><button aria-label="Згорнути"><svg width="19" height="19"><use href="#up"/></svg></button>Перелік станів та спостереження</legend>
              <div class="flex gap-1.5">
                <div class="flex h-[117px] flex-1 flex-col border border-[#5f8fce] bg-white">
                  <table class="w-full"><thead><tr class="h-[29px] border-b border-[#6593cf] bg-linear-to-b from-white to-[#c4dcff]"><th class="w-[20px]"><div class="h-5 border-r border-[#9cc3f7]"></div></th><th class="pl-1.5 text-left font-normal">ЕМЗ</th><th class="w-[23px]"><div class="h-5 border-l-2 border-[#9cc3f7]"></div></th></tr></thead></table>
                  <div class="flex w-[22px] flex-1 flex-col items-center justify-between self-end border-l border-[#e6e6e6] bg-linear-to-r from-[#fafafa] to-[#eeeeee] to-30% py-[7px]"><svg width="11" height="7"><path d="M5.500 0L11 7H0z" fill="#c2c6cf"/></svg><svg width="11" height="7"><path d="M0 0h11L5.500 7z" fill="#c2c6cf"/></svg></div>
                </div>
                <div class="grid grid-cols-2 content-start gap-x-0.5 gap-y-[3px]">
                  <button aria-label="Додати" class="grid h-[30px] w-[30px] place-items-center rounded-sm border border-[#7f9dc6] bg-linear-to-b from-[#f4f8ff] from-50% to-[#d9e5f6] to-50%"><svg width="26" height="26"><path d="M5 1h12l6 6v18H5z" fill="url(#gDoc)" stroke="#777"/><path d="M17 1v6h6z" fill="#fff" stroke="#777"/><circle cx="6.500" cy="17" r="5.800" fill="url(#gGreen)" stroke="#5aa832" stroke-width=".8"/><path d="M3 17h7M6.500 13.500v7" stroke="#fff" stroke-width="2.400"/></svg></button>
                  <button aria-label="Налаштування" class="grid h-[30px] w-[30px] place-items-center rounded-sm border border-[#7f9dc6] bg-linear-to-b from-[#f4f8ff] from-50% to-[#d9e5f6] to-50%"><svg width="26" height="26"><path d="M2 2l11 12" stroke="#8f9498" stroke-width="1.800"/><path d="M13 13l9 9" stroke="#2f9e1f" stroke-width="5" stroke-linecap="round"/><path d="M4 22L17 8" stroke="#9aa0a4" stroke-width="3.600" stroke-linecap="round"/><path d="M4 22L17 8" stroke="#e2e5e7" stroke-width="1.600" stroke-linecap="round"/><path d="M17 2c-3 2-3 6 0 8s6 0 7-3l-4 1-2-2z" fill="#dfe2e4" stroke="#a3a7aa" stroke-width=".8"/></svg></button>
                  <button disabled aria-label="Видалити" class="grid h-[30px] w-[30px] place-items-center rounded-sm border border-[#c3d1e6] bg-[#edf2fa]"><svg width="26" height="26"><use href="#del"/></svg></button>
                  <button aria-label="Оновити" class="grid h-[30px] w-[30px] place-items-center rounded-sm border border-[#7f9dc6] bg-linear-to-b from-[#f4f8ff] from-50% to-[#d9e5f6] to-50%"><svg width="28" height="28"><g fill="#37b81f" stroke="#1d7a12" stroke-width=".9"><path d="M7 7l6 8-3.500.2c0 2.500 2 3.500 5.500 1.800l2 4.500c-6 6-15 4-14-4.500l.5-3L1 14.500z"/><path d="M12 5c5-6 14-5 14 2l-.5 5 2-.5L21 19l-6-6 3.500-.8c1.500-3 0-4.700-3-3z"/></g><path d="M7 10l-2.500 3.500M15 5c3-2 6-2 8 1" stroke="#a8f08c" fill="none" stroke-width="1.300"/></svg></button>
                  <span></span>
                  <button aria-label="Експорт" class="grid h-[30px] w-[30px] place-items-center rounded-sm border border-[#7f9dc6] bg-linear-to-b from-[#f4f8ff] from-50% to-[#d9e5f6] to-50%"><svg width="26" height="26"><path d="M2 6l18-4 4 16-18 6z" fill="#f3f3f3" stroke="#b5b5b5" stroke-width=".7"/><path d="M2 6l18-4 .6 2.600L6 8l3.500 14.500-4 1z" fill="#14661c"/><path d="M8 13l3.500-1 1 4.500-3.500 1zM12 10l3.500-1 2 6.500-4.500 1zM16 7l4.500-1 2 8-4.500 1z" fill="#1fa02c"/><path d="M10 19l13-4M11 21.500l12-4" stroke="#8f8f8f" stroke-dasharray="2 1"/></svg></button>
                </div>
              </div>
            </fieldset>

            <fieldset class="mt-1 min-w-0 rounded-md border border-[#7a98bd] pb-1.5 pl-[11px]">
              <legend class="flex h-[19px] items-center gap-1 pr-1.5 leading-[19px]"><button aria-label="Розгорнути"><svg width="19" height="19"><use href="#down"/></svg></button>Перелік клінічної інформації</legend>
            </fieldset>

            <fieldset class="mt-1 min-w-0 rounded-md border border-[#7a98bd] border-t-[#c6d6e8] pt-1.5 pr-[14px] pb-[13px] pl-[11px]">
              <legend class="flex h-[19px] items-center gap-1 pr-1.5 leading-[19px]"><button aria-label="Згорнути"><svg width="19" height="19"><use href="#up"/></svg></button>Примітки</legend>
              <div class="grid grid-cols-[152px_1fr] items-start gap-y-3 leading-5">
                <label for="n1" class="w-[130px] pl-0.5">Інструкція для лікаря приймаючого МЗ</label><input id="n1" class="h-7 rounded-sm border border-[#7fa6dd] border-t-[#4a78b5] bg-white px-1.5">
                <label for="n2" class="w-[130px] pl-0.5">Інструкція для пацієнта</label><input id="n2" class="h-7 rounded-sm border border-[#7fa6dd] border-t-[#4a78b5] bg-white px-1.5">
              </div>
            </fieldset>
          </fieldset>
        </main>
      </div>
    </div>
  </div>

  <!-- Tooltip and pointer arrow over the window -->
  <div role="tooltip" class="absolute top-[182px] left-[85px] grid h-[29px] w-[78px] place-items-center rounded-sm border border-[#767f8e] bg-linear-to-b from-white to-[#d3ddec] text-[#4c4c4c]">Закрити</div>
  <svg width="80" height="76" class="pointer-events-none absolute top-[153px] left-[129px]"><path d="M72 67L16 13" stroke="#f00" stroke-width="4" stroke-linecap="round"/><path d="M5 4l19 5-10 13z" fill="#f00"/></svg>
</div>

<script>
  // Draws one QR block: random data modules plus three finder squares.
  function drawQr(id, seed) {
    const n = 35, m = 2;
    let d = '';
    const rnd = () => (seed = (seed * 16807) % 2147483647) / 2147483647;
    for (let y = 0; y < n; y++) for (let x = 0; x < n; x++) {
      const dark = rnd() > 0.47;
      const finder = (x < 11 && y < 11) || (x > 23 && y < 11) || (x < 11 && y > 23);
      if (dark && !finder) d += `M${x * m} ${y * m}h${m}v${m}h-${m}z`;
    }
    let s = `<path d="${d}"/>`;
    for (const [x, y] of [[0, 0], [50, 0], [0, 50]])
      s += `<rect x="${x + 1.5}" y="${y + 1.5}" width="17" height="17" fill="none" stroke="#222" stroke-width="3"/><rect x="${x + 3.5}" y="${y + 3.5}" width="13" height="13" fill="none" stroke="#222" stroke-dasharray="1 1"/><rect x="${x + 6}" y="${y + 6}" width="8" height="8"/>`;
    document.getElementById(id).innerHTML = s;
  }
  drawQr('qrA', 4211);
  drawQr('qrB', 90817);
</script>
</body>
</html>
